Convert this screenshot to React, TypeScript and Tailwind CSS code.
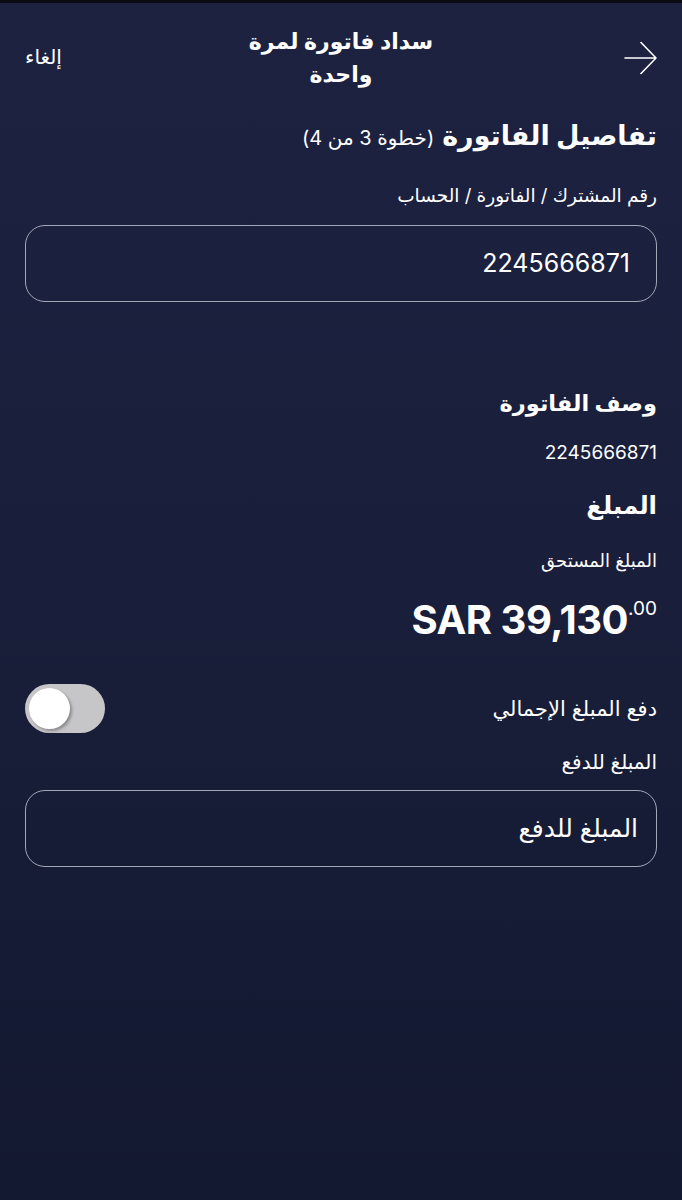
import { useState } from 'react';

function Field({ value, placeholder }: { value?: string; placeholder?: string }) {
  return (
    <div className="h-[77px] rounded-[20px] border-[1.5px] border-[#a3a8b8] flex items-center pl-4">
      {value ? (
        <span className="pr-[26px] text-[25px] text-white">{value}</span>
      ) : (
        <span className="pr-[18px] text-[25px] text-white">{placeholder}</span>
      )}
    </div>
  );
}

export default function App() {
  const [payAll, setPayAll] = useState(false);

  return (
    <div
      dir="rtl"
      className="min-h-[1200px] w-full text-white bg-gradient-to-b from-[#1d2241] via-[#191e3a] to-[#131930] border-t-[3px] border-[#0a0c14]"
      style={{ fontFamily: 'Inter, "DejaVu Sans", sans-serif' }}
    >
      <div className="px-[25px]">
        {/* header */}
        <div className="relative h-[103px] flex items-start justify-between">
          <button className="mt-[38px]">
            <svg width="33" height="34" viewBox="0 0 33 34" fill="none" stroke="white" strokeWidth="1.6" strokeLinecap="round" strokeLinejoin="round" className="rotate-180">
              <path d="M32 17H1M16 1.5L1 17L16 32.5" />
            </svg>
          </button>
          <h1 className="absolute left-1/2 -translate-x-1/2 top-[22px] w-[220px] text-center text-[22px] font-semibold leading-[33px]">
            سداد فاتورة لمرة واحدة
          </h1>
          <button className="mt-[40px] text-[20px] leading-[28px]">إلغاء</button>
        </div>

        {/* step title */}
        <div className="mt-[10px] flex items-baseline gap-2 leading-[40px]">
          <h2 className="text-[27px] font-bold">تفاصيل الفاتورة</h2>
          <span className="text-[20px]">(خطوة 3 من 4)</span>
        </div>

        <p className="mt-[25px] text-[18.5px] leading-[24px]">رقم المشترك / الفاتورة / الحساب</p>

        <div className="mt-[18px]">
          <Field value="2245666871" />
        </div>

        <h3 className="mt-[85px] text-[22.5px] font-bold leading-[32px]">وصف الفاتورة</h3>
        <p className="mt-[22px] text-[19px] leading-[24px]">2245666871</p>

        <h3 className="mt-[23px] text-[24.5px] font-bold leading-[34px]">المبلغ</h3>
        <p className="mt-[27px] text-[18px] leading-[24px]">المبلغ المستحق</p>

        <div className="mt-[23px] flex" dir="ltr">
          <div className="ml-auto flex items-start font-bold">
            <span className="text-[40px] leading-[48px] tracking-[-0.5px]">SAR 39,130</span>
            <span className="text-[19px] font-normal leading-[20px] mt-[3px]">.00</span>
          </div>
        </div>

        <div className="mt-[40px] flex items-center justify-between">
          <span className="text-[21px] leading-[28px]">دفع المبلغ الإجمالي</span>
          <button
            onClick={() => setPayAll(!payAll)}
            className={`relative w-[80px] h-[49px] rounded-full ${payAll ? 'bg-[#34c759]' : 'bg-[#c6c6c8]'}`}
          >
            <span
              className={`absolute top-[4px] w-[41px] h-[41px] rounded-full bg-white shadow-[2px_2px_3px_rgba(0,0,0,0.3)] ${payAll ? 'right-[4px]' : 'right-[35px]'}`}
            />
          </button>
        </div>

        <p className="mt-[16px] text-[20px] leading-[26px]">المبلغ للدفع</p>

        <div className="mt-[15px]">
          <Field placeholder="المبلغ للدفع" />
        </div>
      </div>
    </div>
  );
}
